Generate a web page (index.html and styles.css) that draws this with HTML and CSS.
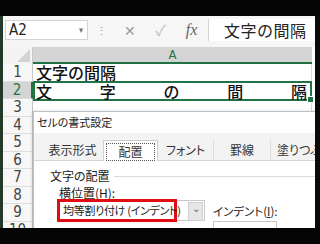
FILE: index.html
```html
<!DOCTYPE html>
<html lang="ja">
<head>
    <meta charset="UTF-8">
    <meta name="viewport" content="width=device-width, initial-scale=1.0">
    <link rel="stylesheet" href="styles.css">
    <title>文字の間隔</title>
</head>
<body>
    <div class="screen">
        <div class="band"></div>
        <div class="window">
            <div class="formula-bar">
                <div class="name-box">
                    <span>A2</span>
                    <span class="caret">▾</span>
                </div>
                <span class="grip">⋮</span>
                <span class="fb-btn cancel">✕</span>
                <span class="fb-btn enter">✓</span>
                <span class="fb-btn fx">fx</span>
                <div class="formula-input">文字の間隔</div>
            </div>
            <div class="sheet">
                <div class="row head-row">
                    <div class="corner"><span class="corner-tri"></span></div>
                    <div class="col-head">A</div>
                </div>
                <div class="row">
                    <div class="row-num">1</div>
                    <div class="cell">文字の間隔</div>
                </div>
                <div class="row">
                    <div class="row-num active">2</div>
                    <div class="cell selected spread">
                        <span>文</span><span>字</span><span>の</span><span>間</span><span>隔</span>
                        <i class="handle"></i>
                    </div>
                </div>
                <div class="row"><div class="row-num">3</div><div class="cell"></div></div>
                <div class="row"><div class="row-num">4</div><div class="cell"></div></div>
                <div class="row"><div class="row-num">5</div><div class="cell"></div></div>
                <div class="row"><div class="row-num">6</div><div class="cell"></div></div>
                <div class="row"><div class="row-num">7</div><div class="cell"></div></div>
                <div class="row"><div class="row-num">8</div><div class="cell"></div></div>
                <div class="row"><div class="row-num">9</div><div class="cell"></div></div>
                <div class="row"><div class="row-num">10</div><div class="cell"></div></div>
            </div>

            <div class="dialog">
                <div class="dlg-title">セルの書式設定</div>
                <div class="dlg-body">
                    <div class="tabs">
                        <div class="tab t1">表示形式</div>
                        <div class="tab t2 current"><span>配置</span></div>
                        <div class="tab t3">フォント</div>
                        <div class="tab t4">罫線</div>
                        <div class="tab t5">塗りつぶし</div>
                    </div>
                    <div class="page">
                        <div class="group-label"><span>文字の配置</span><i class="rule"></i></div>
                        <div class="field-label">横位置(<u>H</u>):</div>
                        <div class="field-row">
                            <div class="combo">
                                <div class="combo-value">均等割り付け (インデント)</div>
                                <div class="combo-arrow">⌄</div>
                            </div>
                            <div class="indent">
                                <div>インデント(<u>I</u>):</div>
                                <div class="spin"><span class="spin-btn">▴</span></div>
                            </div>
                        </div>
                    </div>
                </div>
            </div>
        </div>
        <div class="band"></div>
    </div>
</body>
</html>
```

FILE: styles.css
```css
body {
    margin: 0;
    background-color: #000;
    font-family: "Noto Sans CJK JP", "Noto Sans", sans-serif;
}

.screen {
    width: 320px;
    height: 244px;
    display: flex;
    flex-direction: column;
    overflow: hidden;
}

.band {
    height: 16px;
    flex: none;
    background-color: #050505;
}

.window {
    position: relative;
    height: 212px;
    border-left: 3px solid #23392a;
    border-right: 5px solid #0a0a0a;
    background-color: #fff;
    overflow: hidden;
}

/* formula bar */
.formula-bar {
    height: 31px;
    display: flex;
    align-items: center;
    background-color: #f6f6f6;
    color: #444;
}

.name-box {
    width: 83px;
    height: 20px;
    margin-left: 2px;
    margin-top: -4px;
    display: flex;
    align-items: center;
    justify-content: space-between;
    padding: 0 4px 0 3px;
    box-sizing: border-box;
    border: 1px solid #d4d4d4;
    background-color: #fff;
    font-family: "DejaVu Sans Condensed", "DejaVu Sans", sans-serif;
    font-size: 15px;
    color: #222;
}

.caret {
    font-size: 9px;
    color: #777;
}

.grip {
    width: 26px;
    text-align: center;
    font-size: 11px;
    color: #999;
    margin-top: -4px;
}

.fb-btn {
    width: 31px;
    text-align: center;
    margin-top: -4px;
    color: #9a9a9a;
}

.cancel {
    font-size: 14px;
}

.enter {
    font-size: 15px;
    color: #bbb;
}

.fx {
    font-family: "Liberation Serif", serif;
    font-style: italic;
    font-size: 16px;
    color: #666;
}

.formula-input {
    flex: 1;
    height: 22px;
    margin-left: 1px;
    margin-top: -4px;
    padding-left: 15px;
    border-left: 1px solid #d4d4d4;
    background-color: #fff;
    font-size: 16px;
    line-height: 22px;
    color: #222;
    letter-spacing: 0.5px;
}

/* sheet */
.sheet {
    display: flex;
    flex-direction: column;
}

.row {
    display: flex;
    height: 17.5px;
}

.head-row {
    height: 17px;
}

.corner {
    width: 30px;
    position: relative;
    background-color: #f4f4f4;
    border-right: 1px solid #c6c6c6;
    box-sizing: border-box;
}

.corner-tri {
    position: absolute;
    right: 2px;
    bottom: 2px;
    border-left: 13px solid transparent;
    border-bottom: 13px solid #d3d3d3;
}

.col-head {
    width: 279px;
    background-color: #d4d4d4;
    border-bottom: 2px solid #217346;
    box-sizing: border-box;
    text-align: center;
    font-family: "DejaVu Sans Condensed", "DejaVu Sans", sans-serif;
    font-size: 13px;
    line-height: 15px;
    color: #217346;
}

.row-num {
    width: 30px;
    flex: none;
    box-sizing: border-box;
    border-right: 1px solid #c6c6c6;
    border-bottom: 1px solid #dedede;
    background-color: #f7f7f7;
    text-align: center;
    font-family: "DejaVu Sans Condensed", "DejaVu Sans", sans-serif;
    font-size: 15px;
    line-height: 17px;
    color: #444;
}

.row-num.active {
    background-color: #d4d4d4;
    color: #217346;
    border-right: 2px solid #217346;
}

.cell {
    width: 279px;
    box-sizing: border-box;
    border-bottom: 1px solid #dcdcdc;
    border-right: 1px solid #dcdcdc;
    padding-left: 3px;
    font-size: 16px;
    line-height: 16px;
    color: #111;
    font-weight: 500;
}

.cell.selected {
    position: relative;
    border: 2px solid #217346;
    margin-top: -1px;
    height: 20px;
    line-height: 16px;
}

.spread {
    display: flex;
    justify-content: space-between;
    padding: 0 3px 0 1px;
}

.handle {
    position: absolute;
    right: -4px;
    bottom: -4px;
    width: 5px;
    height: 5px;
    background-color: #217346;
    border: 1px solid #fff;
}

/* dialog */
.dialog {
    position: absolute;
    left: 30px;
    top: 95px;
    width: 300px;
    height: 130px;
    background-color: #fff;
    border: 1px solid #b9c3cc;
    box-shadow: -1px 0 3px rgba(0, 0, 0, 0.15);
    font-size: 11px;
    color: #222;
    font-feature-settings: "palt";
}

.dlg-title {
    height: 21px;
    padding-left: 3px;
    line-height: 21px;
    font-size: 11px;
}

.dlg-body {
    background-color: #f3f3f3;
    padding-top: 2px;
}

.tabs {
    display: flex;
    align-items: flex-end;
    height: 25px;
    padding-left: 8px;
    border-bottom: 1px solid #d6d6d6;
    font-size: 12px;
    white-space: nowrap;
}

.tab {
    height: 20px;
    line-height: 20px;
    text-align: center;
    color: #333;
    box-sizing: border-box;
    border-right: 1px solid #dcdcdc;
    flex: none;
}

.t1 { width: 61px; border-right: none; }
.t2 { width: 55px; }
.t3 { width: 56px; }
.t4 { width: 57px; }
.t5 { width: 60px; padding-left: 6px; text-align: left; }

.tab.current {
    height: 21px;
    margin-bottom: -1px;
    background-color: #fff;
    border: 1px solid #cfcfcf;
    border-bottom: none;
    padding: 2px;
}

.tab.current span {
    display: block;
    height: 16px;
    line-height: 16px;
    border: 1px dotted #555;
}

.page {
    background-color: #fff;
    height: 80px;
    padding: 8px 0 0 16px;
}

.group-label {
    display: flex;
    align-items: center;
    gap: 4px;
    font-size: 12px;
    line-height: 14px;
}

.rule {
    flex: 1;
    border-top: 1px solid #dcdcdc;
}

.field-label {
    margin: 3px 0 0 9px;
    font-size: 12px;
    line-height: 14px;
}

.field-row {
    display: flex;
    margin-left: 7px;
}

.combo {
    display: flex;
    width: 148px;
    height: 21px;
    margin-top: 0;
    border: 1px solid #c9c9c9;
    box-sizing: border-box;
}

.combo-value {
    width: 120px;
    flex: none;
    box-sizing: border-box;
    margin: -2px 0 0 -1px;
    height: 23px;
    border: 3px solid #e10d12;
    padding-left: 3px;
    font-size: 11px;
    line-height: 17px;
    white-space: nowrap;
    letter-spacing: -0.3px;
}

.combo-arrow {
    width: 13px;
    height: 17px;
    margin: 1px 1px 0 auto;
    background-color: #e6e6e6;
    border: 1px solid #cfcfcf;
    text-align: center;
    font-size: 10px;
    line-height: 10px;
    color: #666;
}

.indent {
    margin-left: 8px;
    margin-top: 4px;
    font-size: 11.5px;
    line-height: 14px;
    white-space: nowrap;
}

.spin {
    width: 62px;
    height: 16px;
    margin-top: 3px;
    border: 1px solid #c9c9c9;
    text-align: right;
}

.spin-btn {
    display: inline-block;
    width: 10px;
    font-size: 9px;
    line-height: 8px;
    color: #333;
}
```
